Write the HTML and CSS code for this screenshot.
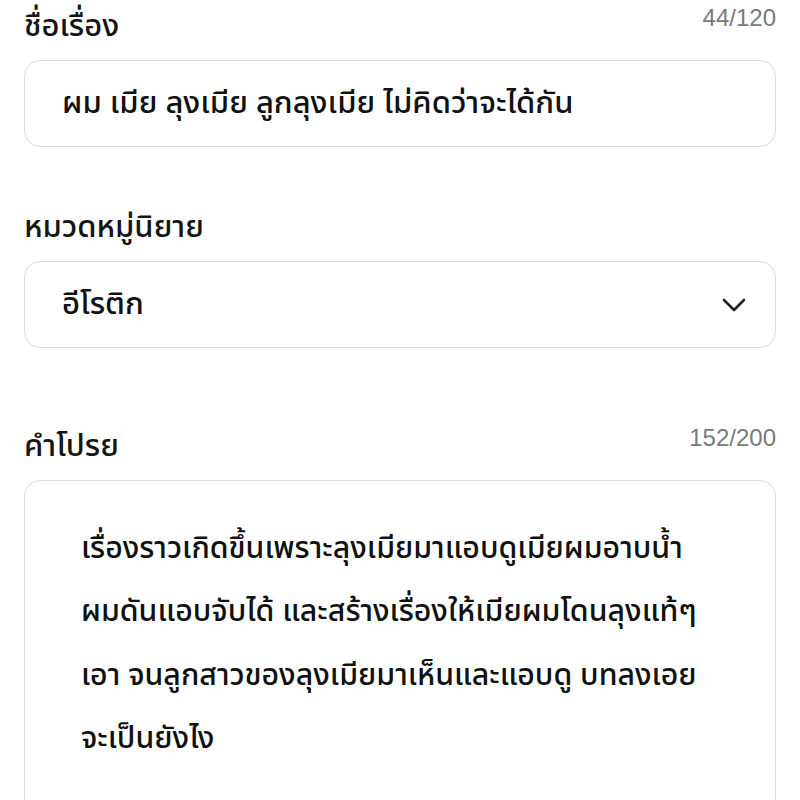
FILE: index.html
```html
<!DOCTYPE html>
<html lang="th">
<head>
<meta charset="utf-8">
<link rel="stylesheet" href="styles.css">
</head>
<body>
<div class="form">
  <div class="field">
    <div class="head">
      <span class="label">ชื่อเรื่อง</span>
      <span class="count">44/120</span>
    </div>
    <div class="box input">ผม เมีย ลุงเมีย ลูกลุงเมีย ไม่คิดว่าจะได้กัน</div>
  </div>
  <div class="field">
    <div class="head">
      <span class="label">หมวดหมู่นิยาย</span>
    </div>
    <div class="box select">
      <span>อีโรติก</span>
      <svg class="chev" width="26" height="16" viewBox="0 0 26 16"><path d="M3 3 L13 13 L23 3" fill="none" stroke="#222" stroke-width="2.6" stroke-linecap="round" stroke-linejoin="round"/></svg>
    </div>
  </div>
  <div class="field">
    <div class="head">
      <span class="label">คำโปรย</span>
      <span class="count">152/200</span>
    </div>
    <div class="box area">
      <div>เรื่องราวเกิดขึ้นเพราะลุงเมียมาแอบดูเมียผมอาบน้ำ</div>
      <div>ผมดันแอบจับได้ และสร้างเรื่องให้เมียผมโดนลุงแท้ๆ</div>
      <div>เอา จนลูกสาวของลุงเมียมาเห็นและแอบดู บทลงเอย</div>
      <div>จะเป็นยังไง</div>
    </div>
  </div>
</div>
</body>
</html>
```

FILE: styles.css
```css
html, body {
  margin: 0;
  padding: 0;
  background: #fff;
}
body {
  font-family: "Noto Sans Thai", "Noto Sans", "Liberation Sans", sans-serif;
  color: #111;
}
.form {
  padding: 0 24px;
  display: flex;
  flex-direction: column;
}
.head {
  display: flex;
  justify-content: space-between;
  height: 60px;
  align-items: center;
}
.label {
  font-size: 31px;
  font-weight: 500;
  color: #151515;
  margin-top: -8px;
}
.count {
  font-family: "Liberation Sans", sans-serif;
  font-size: 24px;
  color: #7a7a7a;
  align-self: flex-start;
  margin-top: 4px;
}
.box {
  border: 1.5px solid #dcdcdc;
  border-radius: 16px;
  box-sizing: border-box;
  font-size: 31px;
  font-weight: 500;
  color: #111;
}
.input {
  height: 87px;
  display: flex;
  align-items: center;
  padding-left: 37px;
  margin-bottom: 54px;
}
.select {
  height: 87px;
  display: flex;
  align-items: center;
  justify-content: space-between;
  padding: 0 28px 0 37px;
  margin-bottom: 72px;
}
.area {
  height: 340px;
  padding: 37px 0 0 56px;
  font-size: 30.3px;
  line-height: 63.3px;
}
```
